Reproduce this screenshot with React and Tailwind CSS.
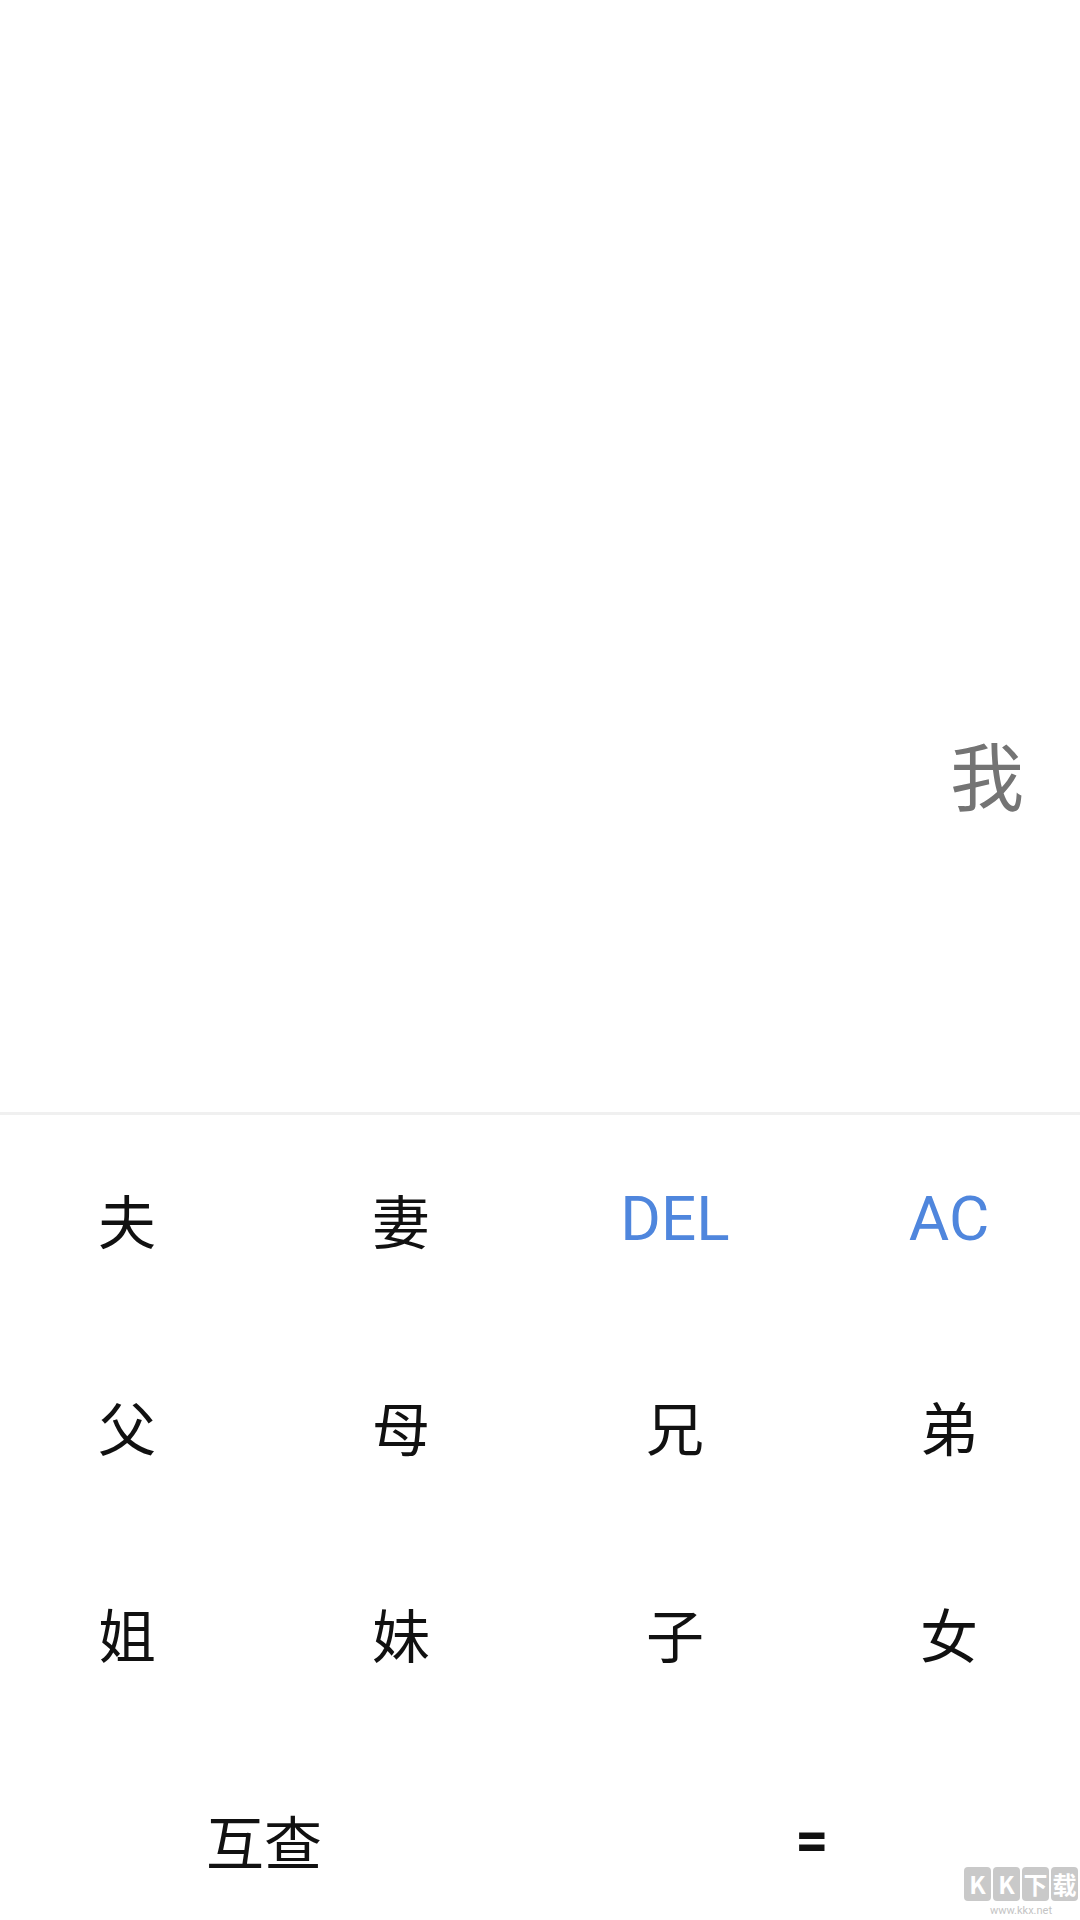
import React from "react";

const cjk = { fontFamily: '"Noto Sans CJK SC", "Noto Sans", sans-serif' };
const latin = { fontFamily: 'Roboto, "Noto Sans", sans-serif' };

function Key({ children, blue }) {
  return (
    <div className="flex h-[207px] items-center justify-center">
      <span
        className={
          blue
            ? "text-[62px] leading-none text-[#4f86dd]"
            : "text-[58px] leading-none text-[#111111]"
        }
        style={blue ? latin : cjk}
      >
        {children}
      </span>
    </div>
  );
}

export default function App() {
  const rows = [
    [["夫"], ["妻"], ["DEL", true], ["AC", true]],
    [["父"], ["母"], ["兄"], ["弟"]],
    [["姐"], ["妹"], ["子"], ["女"]],
  ];
  return (
    <div className="relative h-[1920px] w-[1080px] overflow-hidden bg-white">
      <div className="flex h-[1112px] flex-col items-end pr-[56px] pt-[736px]">
        <span className="text-[74px] leading-none text-[#747474]" style={cjk}>
          我
        </span>
      </div>
      <div className="h-[3px] bg-[#f0f0f0]" />
      <div className="-ml-[10px] w-[1096px]">
        {rows.map((r, i) => (
          <div key={i} className="grid grid-cols-4">
            {r.map(([t, b]) => (
              <Key key={t} blue={b}>
                {t}
              </Key>
            ))}
          </div>
        ))}
        <div className="grid grid-cols-2">
          <Key>互查</Key>
          <div className="flex h-[207px] items-center justify-center">
            <span className="text-[58px] font-bold leading-none text-[#111111]" style={latin}>
              =
            </span>
          </div>
        </div>
      </div>
      <div className="absolute bottom-[4px] right-[2px] flex flex-col items-center gap-[4px]">
        <div className="flex gap-[2px]">
          {["K", "K", "下", "载"].map((c, i) => (
            <div
              key={i}
              className="flex h-[34px] w-[27px] items-center justify-center rounded-[4px] bg-[#c9c9c9] text-[24px] font-bold leading-none text-white"
              style={cjk}
            >
              {c}
            </div>
          ))}
        </div>
        <span className="text-[11px] leading-none text-[#c4c4c4]" style={latin}>
          www.kkx.net
        </span>
      </div>
    </div>
  );
}
